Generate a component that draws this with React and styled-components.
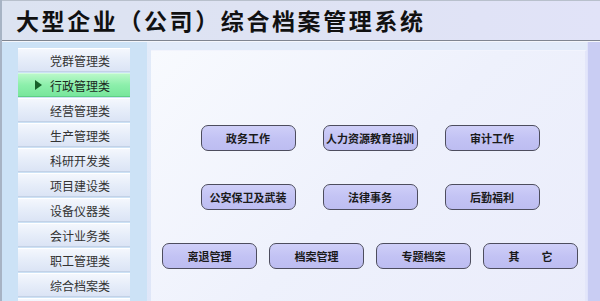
import styled, { createGlobalStyle } from "styled-components"

const GlobalStyle = createGlobalStyle`
    html, body {
        margin: 0;
        padding: 0;
        background: #ffffff;
    }
    body {
        font-family: "Noto Sans CJK SC", "Liberation Sans", sans-serif;
    }
`

const sideItems = [
    "党群管理类",
    "行政管理类",
    "经营管理类",
    "生产管理类",
    "科研开发类",
    "项目建设类",
    "设备仪器类",
    "会计业务类",
    "职工管理类",
    "综合档案类",
    "",
]

const buttonRows = [
    { gap: 27, items: ["政务工作", "人力资源教育培训", "审计工作"] },
    { gap: 27, items: ["公安保卫及武装", "法律事务", "后勤福利"] },
    { gap: 12, items: ["离退管理", "档案管理", "专题档案", "其　　它"] },
]

const Frame = styled.div`
    width: 600px;
    height: 301px;
    overflow: hidden;
    display: flex;
    flex-direction: column;
    box-sizing: border-box;
    border-left: 2px solid #a7b3c4;
`

const Header = styled.header`
    height: 41px;
    flex-shrink: 0;
    box-sizing: border-box;
    display: flex;
    align-items: center;
    padding-left: 14px;
    background: linear-gradient(to right, #dce3f1, #dfe3f4 60%, #e1e3f8);
    border-top: 1px solid #b8c0cc;
    border-bottom: 1px solid #7f8590;
    box-shadow: 0 1px 0 #f4f6fb;
`

const Title = styled.h1`
    margin: 0;
    font-size: 23px;
    font-weight: 700;
    letter-spacing: 2.6px;
    color: #111;
    line-height: 1;
`

const Body = styled.div`
    flex: 1;
    display: flex;
    margin-top: 1px;
    background: linear-gradient(to right, #cce2f6, #d7e2f8 40%, #d3d8f6);
`

const Sidebar = styled.nav`
    width: 145px;
    flex-shrink: 0;
    display: flex;
    flex-direction: column;
    gap: 1px;
    padding: 6px 0 0 16px;
    box-sizing: border-box;
    background: #cce2f6;
`

const SideItem = styled.div`
    position: relative;
    width: 112px;
    height: 24px;
    flex-shrink: 0;
    box-sizing: border-box;
    display: flex;
    align-items: center;
    justify-content: center;
    padding-left: 12px;
    font-size: 12px;
    color: ${(p) => (p.$active ? "#1b2a1f" : "#333")};
    background: ${(p) =>
        p.$active
            ? "linear-gradient(to bottom, #b9f8c9, #8cefab 50%, #78e69c)"
            : "linear-gradient(to bottom, #f4f7fd, #e6edf9 50%, #dbe4f5)"};
    border-top: 1px solid ${(p) => (p.$active ? "#d2fbdc" : "#ffffff")};
    border-bottom: 1px solid ${(p) => (p.$active ? "#5fcf85" : "#c3d1e6")};
`

const Arrow = styled.span`
    position: absolute;
    left: 17px;
    top: 50%;
    transform: translateY(-50%);
    width: 0;
    height: 0;
    border-top: 5px solid transparent;
    border-bottom: 5px solid transparent;
    border-left: 7px solid #16602a;
`

const Main = styled.main`
    flex: 1;
    display: flex;
    padding: 8px 1px 0 4px;
    background: linear-gradient(to bottom, #e2ebf9, #dfe6f8);
    border-right: 12px solid #c9cdf3;
    box-shadow: inset -1px 0 0 #dfe2fa;
`

const Panel = styled.section`
    flex: 1;
    display: flex;
    flex-direction: column;
    gap: 33px;
    padding-top: 74px;
    background: linear-gradient(135deg, #f8fafe, #eef1fc 50%, #eaecfb);
    border-top: 1px solid #f2f4fd;
    border-right: 2px solid #e3e6fa;
`

const ButtonRow = styled.div`
    display: flex;
    justify-content: center;
    gap: ${(p) => p.$gap}px;
    padding-left: 4px;
`

const CatButton = styled.button`
    width: 95px;
    height: 26px;
    box-sizing: border-box;
    padding: 0;
    border: 1px solid #4d4d5e;
    border-radius: 7px;
    background: linear-gradient(to bottom, #cfcff8, #c3c3f4 50%, #bdbdf1);
    font-family: "Noto Sans CJK SC", "Liberation Sans", sans-serif;
    font-size: 11px;
    font-weight: 700;
    color: #1a1a1a;
    white-space: pre;
    cursor: pointer;
`

export default function App() {
    return (
        <>
            <GlobalStyle />
            <Frame>
                <Header>
                    <Title>大型企业（公司）综合档案管理系统</Title>
                </Header>
                <Body>
                    <Sidebar>
                        {sideItems.map((name, i) => (
                            <SideItem key={i} $active={i === 1}>
                                {i === 1 && <Arrow />}
                                {name}
                            </SideItem>
                        ))}
                    </Sidebar>
                    <Main>
                        <Panel>
                            {buttonRows.map((row, r) => (
                                <ButtonRow key={r} $gap={row.gap}>
                                    {row.items.map((label) => (
                                        <CatButton key={label}>{label}</CatButton>
                                    ))}
                                </ButtonRow>
                            ))}
                        </Panel>
                    </Main>
                </Body>
            </Frame>
        </>
    )
}
